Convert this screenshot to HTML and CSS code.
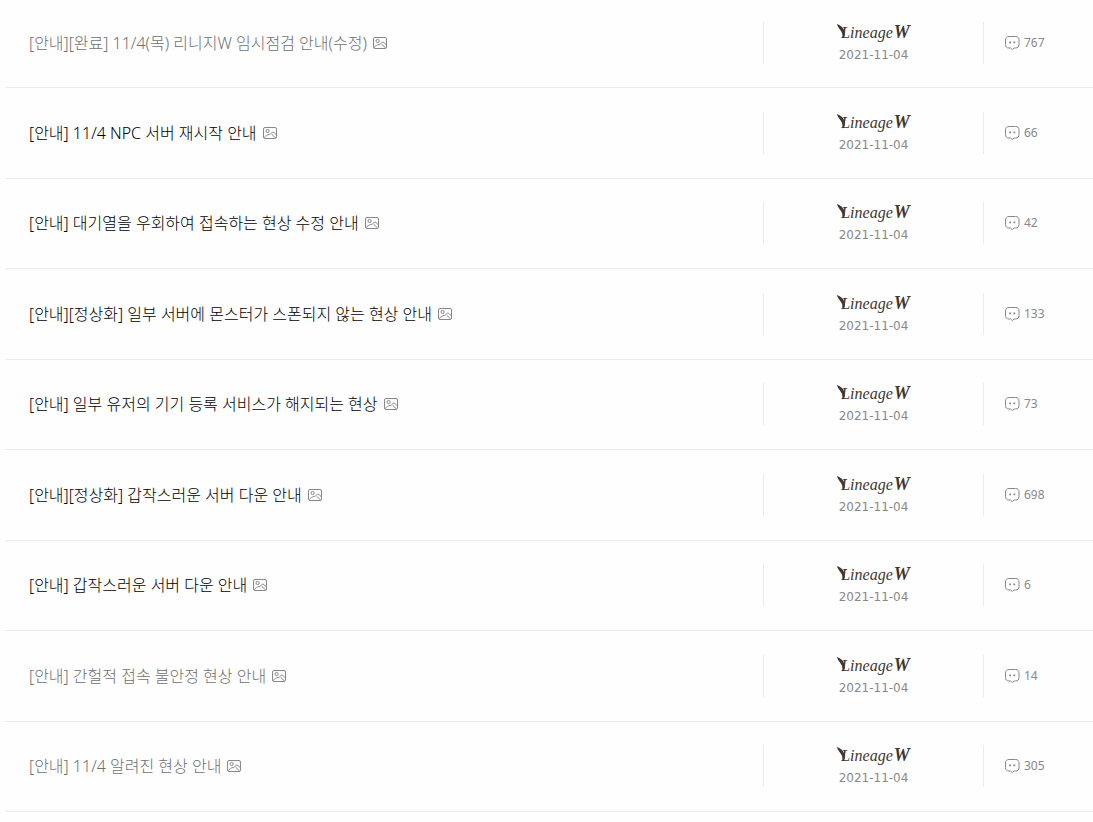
FILE: index.html
```html
<!doctype html>
<html lang="ko">
<head>
	<meta charset="UTF-8">
	<title>공지사항</title>
	<link rel="stylesheet" href="styles.css">
</head>
<body>
	<svg class="defs" aria-hidden="true">
		<symbol id="ico-img" viewBox="0 0 15 13">
			<rect x="0.5" y="0.5" width="13" height="11" rx="1.5"/>
			<circle cx="4.6" cy="4" r="1.6"/>
			<path d="M1 10.8C2.6 8.6 4.3 7.8 6.2 7.5C8 7.2 8.4 5.3 9.8 5.1C11.3 4.9 12 7.3 13.4 7.9M8.6 7.2L12.6 11"/>
		</symbol>
		<symbol id="ico-cmt" viewBox="0 0 15 15">
			<path d="M4 0.5H10.5C12.8 0.5 14 1.8 14 4V8.5C14 10.8 12.8 12 10.5 12H9L7.3 13.6L5.6 12H4C1.8 12 0.5 10.8 0.5 8.5V4C0.5 1.8 1.8 0.5 4 0.5Z"/>
			<path class="dot" d="M4.2 5.4h1.8v1.8h-1.8zM8.4 5.4h1.8v1.8h-1.8z"/>
		</symbol>
		<symbol id="wing" viewBox="0 0 10 16">
			<path d="M0 0C3 1.2 6.4 3.3 7 6.5C7.2 8.5 8.6 9.6 7.6 12L5.4 14.4C5.8 11 5.4 8.6 3.6 6.4C2.2 4.4 0.6 2.8 0 0Z"/>
		</symbol>
	</svg>
	<ul class="board">
		<li class="read">
			<a class="title" href="#">[안내][완료] 11/4(목) 리니지W 임시점검 안내(수정)<svg class="img"><use href="#ico-img"/></svg></a>
			<div class="info"><span class="logo"><svg><use href="#wing"/></svg>Lineage<b>W</b></span><span class="date">2021-11-04</span></div>
			<div class="cmt"><svg><use href="#ico-cmt"/></svg>767</div>
		</li>
		<li>
			<a class="title" href="#">[안내] 11/4 NPC 서버 재시작 안내<svg class="img"><use href="#ico-img"/></svg></a>
			<div class="info"><span class="logo"><svg><use href="#wing"/></svg>Lineage<b>W</b></span><span class="date">2021-11-04</span></div>
			<div class="cmt"><svg><use href="#ico-cmt"/></svg>66</div>
		</li>
		<li>
			<a class="title" href="#">[안내] 대기열을 우회하여 접속하는 현상 수정 안내<svg class="img"><use href="#ico-img"/></svg></a>
			<div class="info"><span class="logo"><svg><use href="#wing"/></svg>Lineage<b>W</b></span><span class="date">2021-11-04</span></div>
			<div class="cmt"><svg><use href="#ico-cmt"/></svg>42</div>
		</li>
		<li>
			<a class="title" href="#">[안내][정상화] 일부 서버에 몬스터가 스폰되지 않는 현상 안내<svg class="img"><use href="#ico-img"/></svg></a>
			<div class="info"><span class="logo"><svg><use href="#wing"/></svg>Lineage<b>W</b></span><span class="date">2021-11-04</span></div>
			<div class="cmt"><svg><use href="#ico-cmt"/></svg>133</div>
		</li>
		<li>
			<a class="title" href="#">[안내] 일부 유저의 기기 등록 서비스가 해지되는 현상<svg class="img"><use href="#ico-img"/></svg></a>
			<div class="info"><span class="logo"><svg><use href="#wing"/></svg>Lineage<b>W</b></span><span class="date">2021-11-04</span></div>
			<div class="cmt"><svg><use href="#ico-cmt"/></svg>73</div>
		</li>
		<li>
			<a class="title" href="#">[안내][정상화] 갑작스러운 서버 다운 안내<svg class="img"><use href="#ico-img"/></svg></a>
			<div class="info"><span class="logo"><svg><use href="#wing"/></svg>Lineage<b>W</b></span><span class="date">2021-11-04</span></div>
			<div class="cmt"><svg><use href="#ico-cmt"/></svg>698</div>
		</li>
		<li>
			<a class="title" href="#">[안내] 갑작스러운 서버 다운 안내<svg class="img"><use href="#ico-img"/></svg></a>
			<div class="info"><span class="logo"><svg><use href="#wing"/></svg>Lineage<b>W</b></span><span class="date">2021-11-04</span></div>
			<div class="cmt"><svg><use href="#ico-cmt"/></svg>6</div>
		</li>
		<li class="read">
			<a class="title" href="#">[안내] 간헐적 접속 불안정 현상 안내<svg class="img"><use href="#ico-img"/></svg></a>
			<div class="info"><span class="logo"><svg><use href="#wing"/></svg>Lineage<b>W</b></span><span class="date">2021-11-04</span></div>
			<div class="cmt"><svg><use href="#ico-cmt"/></svg>14</div>
		</li>
		<li class="read">
			<a class="title" href="#">[안내] 11/4 알려진 현상 안내<svg class="img"><use href="#ico-img"/></svg></a>
			<div class="info"><span class="logo"><svg><use href="#wing"/></svg>Lineage<b>W</b></span><span class="date">2021-11-04</span></div>
			<div class="cmt"><svg><use href="#ico-cmt"/></svg>305</div>
		</li>
	</ul>
</body>
</html>
```
FILE: styles.css
```css
body{
	margin: 0;
	background: #fefefe;
	font-family: "Noto Sans","Noto Sans CJK KR",sans-serif;
}
.defs{
	display: block;
	width: 0;
	height: 0;
}
.board{
	list-style: none;
	margin: 0 0 0 5px;
	padding: 0;
}
.board li{
	display: flex;
	align-items: center;
	padding: 23px 0 24px;
	border-bottom: 1px solid #ebebeb;
}
.board li:nth-child(even){
	padding-top: 24px;
}
.board li:first-child{
	padding: 22px 0 23px;
}
.title{
	flex: 1;
	display: flex;
	align-items: center;
	padding-left: 24px;
	font-size: 16px;
	font-weight: 300;
	line-height: 24px;
	color: #000;
	text-decoration: none;
}
.read .title{
	color: #707070;
}
.img{
	width: 15px;
	height: 13px;
	margin-left: 6px;
	fill: none;
	stroke: #888;
}
.info{
	width: 219px;
	height: 42px;
	border-left: 1px solid #ebebeb;
	border-right: 1px solid #ebebeb;
	display: flex;
	flex-direction: column;
	align-items: center;
}
.logo{
	position: relative;
	padding-left: 4px;
	color: #40372f;
	font: italic 16px/22px "Liberation Serif",serif;
}
.logo b{
	margin-left: 1px;
	font-size: 18px;
	line-height: 20px;
}
/* wing on top of the L */
.logo svg{
	position: absolute;
	left: 0;
	top: 2px;
	width: 10px;
	height: 16px;
	fill: #40372f;
}
.date{
	font: 12px/22px "DejaVu Sans",sans-serif;
	color: #888;
}
.cmt{
	width: 88px;
	padding-left: 21px;
	display: flex;
	align-items: center;
	gap: 4px;
	font-size: 12px;
	line-height: 20px;
	color: #888;
}
.cmt svg{
	width: 15px;
	height: 15px;
	fill: none;
	stroke: #888;
}
.dot{
	fill: #888;
	stroke: none;
}
```
